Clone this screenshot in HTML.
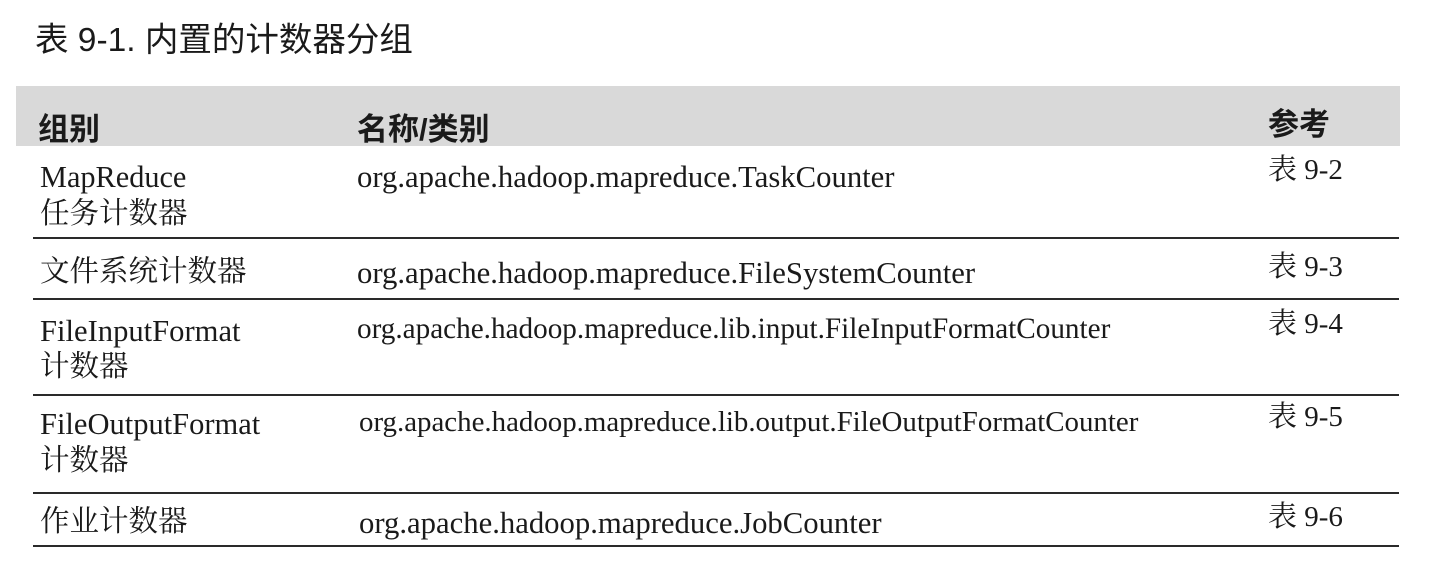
<!DOCTYPE html>
<html><head><meta charset="utf-8"><style>
body{margin:0;width:1444px;height:562px;background:#fff;position:relative;overflow:hidden;font-family:"Liberation Serif","Noto Serif CJK SC",serif;color:#1a1a1a}
.t{position:absolute;white-space:nowrap;font-size:29.5px;line-height:30px}
.s{font-family:"Liberation Sans","Noto Sans CJK SC",sans-serif}
.l{position:absolute;left:33px;width:1366px;height:2px;background:#2a2a2a}
.band{position:absolute;left:16px;top:86px;width:1384px;height:60px;background:#d9d9d9}
.r{font-size:29px}
</style></head><body>
<div class="t s" style="left:35px;top:26px;font-size:33.5px">表 9-1. 内置的计数器分组</div>
<div class="band"></div>
<div class="t s" style="left:38px;top:115px;font-size:31px;font-weight:bold">组别</div>
<div class="t s" style="left:357px;top:115px;font-size:31px;font-weight:bold">名称/类别</div>
<div class="t s" style="left:1268px;top:110px;font-size:31px;font-weight:bold">参考</div>

<div class="t" style="left:40px;top:162px;font-size:30.3px">MapReduce</div>
<div class="t" style="left:40px;top:199px">任务计数器</div>
<div class="t" style="left:357px;top:162px;font-size:30.7px">org.apache.hadoop.mapreduce.TaskCounter</div>
<div class="t r" style="left:1268px;top:155px">表 9-2</div>
<div class="l" style="top:237px"></div>

<div class="t" style="left:40px;top:257px">文件系统计数器</div>
<div class="t" style="left:357px;top:258px;font-size:30.7px">org.apache.hadoop.mapreduce.FileSystemCounter</div>
<div class="t r" style="left:1268px;top:252px">表 9-3</div>
<div class="l" style="top:298px"></div>

<div class="t" style="left:40px;top:316px;font-size:30.6px">FileInputFormat</div>
<div class="t" style="left:40px;top:352px">计数器</div>
<div class="t" style="left:357px;top:314px;font-size:29.2px">org.apache.hadoop.mapreduce.lib.input.FileInputFormatCounter</div>
<div class="t r" style="left:1268px;top:309px">表 9-4</div>
<div class="l" style="top:394px"></div>

<div class="t" style="left:40px;top:409px;font-size:30.5px">FileOutputFormat</div>
<div class="t" style="left:40px;top:446px">计数器</div>
<div class="t" style="left:359px;top:407px;font-size:28.9px">org.apache.hadoop.mapreduce.lib.output.FileOutputFormatCounter</div>
<div class="t r" style="left:1268px;top:402px">表 9-5</div>
<div class="l" style="top:492px"></div>

<div class="t" style="left:40px;top:507px">作业计数器</div>
<div class="t" style="left:359px;top:508px;font-size:30.7px">org.apache.hadoop.mapreduce.JobCounter</div>
<div class="t r" style="left:1268px;top:502px">表 9-6</div>
<div class="l" style="top:545px"></div>
</body></html>
